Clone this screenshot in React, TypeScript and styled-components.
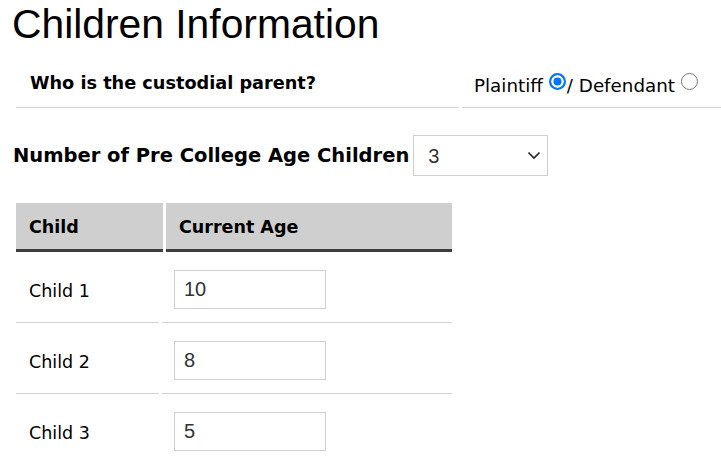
import React from "react";
import styled, { createGlobalStyle } from "styled-components";

const GlobalStyle = createGlobalStyle`
  body {
    margin: 0;
    background: #fff;
    color: #000;
    font-family: "DejaVu Sans", Verdana, sans-serif;
  }
`;

const Page = styled.div`
  padding: 1px 0 0 12px;
`;

const Title = styled.h1`
  margin: 0;
  font-family: "Liberation Sans", Arial, sans-serif;
  font-weight: 400;
  font-size: 40.8px;
  line-height: 46px;
`;

const QuestionRow = styled.div`
  display: grid;
  grid-template-columns: 443px 1fr;
  column-gap: 3px;
  margin-left: 4px;
`;

const QuestionCell = styled.div<{ $top: number; $left: number; $size: number; $bold?: boolean }>`
  box-sizing: border-box;
  height: 61px;
  padding: ${(p) => p.$top}px 0 0 ${(p) => p.$left}px;
  border-bottom: 1px solid #d3d3d3;
  font-size: ${(p) => p.$size}px;
  line-height: 20px;
  font-weight: ${(p) => (p.$bold ? 700 : 400)};
  white-space: nowrap;
`;

const Radio = styled.input.attrs({ type: "radio" })`
  appearance: none;
  display: inline-block;
  box-sizing: border-box;
  width: 17px;
  min-width: 17px;
  height: 17px;
  margin: 0 1px 0 6px;
  padding: 0;
  vertical-align: 2px;
  border: 1.3px solid #767676;
  border-radius: 50%;
  background: #fff;

  &:checked {
    border: 2px solid #0075ff;
    background: #0075ff;
    box-shadow: inset 0 0 0 2.5px #fff;
  }
`;

const CountRow = styled.div`
  display: flex;
  align-items: center;
  gap: 6px;
  margin: 27px 0;
`;

const CountLabel = styled.label`
  font-size: 19.5px;
  font-weight: 700;
  line-height: 23px;
  padding-left: 1px;
`;

const SelectBox = styled.div`
  position: relative;
  width: 135px;
  height: 41px;
  margin-left: -2px;
`;

const Select = styled.select`
  appearance: none;
  box-sizing: border-box;
  width: 100%;
  height: 100%;
  padding: 0 0 0 14px;
  border: 1px solid #d0d0d0;
  border-radius: 0;
  background: #fff;
  color: #333;
  font-family: "Liberation Sans", Arial, sans-serif;
  font-size: 20px;
`;

const Chevron = styled.svg`
  position: absolute;
  right: 7px;
  top: 16px;
  pointer-events: none;
`;

const Table = styled.div`
  margin-left: 4px;
  width: 436px;
`;

const Row = styled.div<{ $cols: string }>`
  display: grid;
  grid-template-columns: ${(p) => p.$cols};
  column-gap: 3px;
`;

const HeadCell = styled.div`
  box-sizing: border-box;
  height: 49px;
  padding: 14px 12px 0 13px;
  background: #cfcfcf;
  border-bottom: 3px solid #3d3d3d;
  font-size: 17.5px;
  font-weight: 700;
  line-height: 20px;
`;

const BodyCell = styled.div<{ $top: number }>`
  box-sizing: border-box;
  height: 71px;
  padding: ${(p) => p.$top}px 12px 0 13px;
  border-bottom: 1px solid #d3d3d3;
  font-size: 17.5px;
  line-height: 20px;
`;

const AgeInput = styled.input`
  box-sizing: border-box;
  width: 152px;
  height: 39px;
  margin: 0 0 0 -1px;
  padding: 0 9px;
  border: 1px solid #d0d0d0;
  border-radius: 0;
  color: #333;
  font-family: "Liberation Sans", Arial, sans-serif;
  font-size: 20px;
`;

const children = [
  { name: "Child 1", age: 10 },
  { name: "Child 2", age: 8 },
  { name: "Child 3", age: 5 },
];

export default function App() {
  return (
    <Page>
      <GlobalStyle />
      <Title>Children Information</Title>

      <QuestionRow>
        <QuestionCell $top={26} $left={14} $size={17.7} $bold>
          Who is the custodial parent?
        </QuestionCell>
        <QuestionCell $top={26} $left={12} $size={18.3}>
          Plaintiff
          <Radio name="custodial" defaultChecked />/ Defendant
          <Radio name="custodial" />
        </QuestionCell>
      </QuestionRow>

      <CountRow>
        <CountLabel htmlFor="count">Number of Pre College Age Children</CountLabel>
        <SelectBox>
          <Select id="count" defaultValue="3">
            <option value="1">1</option>
            <option value="2">2</option>
            <option value="3">3</option>
            <option value="4">4</option>
          </Select>
          <Chevron width="14" height="9" viewBox="0 0 14 9">
            <polyline points="1.5,1.5 7,7 12.5,1.5" fill="none" stroke="#222" strokeWidth="1.6" />
          </Chevron>
        </SelectBox>
      </CountRow>

      <Table>
        <Row $cols="147px 286px">
          <HeadCell>Child</HeadCell>
          <HeadCell>Current Age</HeadCell>
        </Row>
        {children.map((c) => (
          <Row $cols="143px 290px" key={c.name}>
            <BodyCell $top={29}>{c.name}</BodyCell>
            <BodyCell $top={18}>
              <AgeInput defaultValue={c.age} />
            </BodyCell>
          </Row>
        ))}
      </Table>
    </Page>
  );
}
